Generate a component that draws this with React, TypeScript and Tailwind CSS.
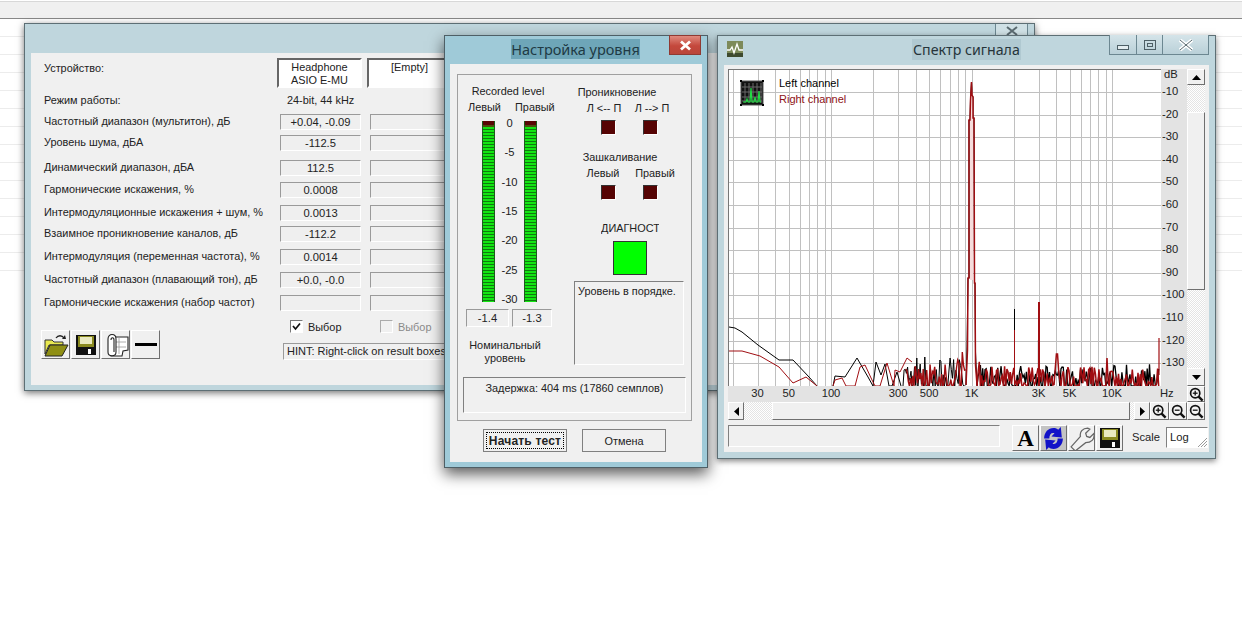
import React from "react";

const FONT = "font-['Liberation_Sans',Arial,sans-serif]";
const raisedEdge = "border border-t-white border-l-white border-r-[#6f6f6f] border-b-[#6f6f6f]";
const raised = `${raisedEdge} bg-[#f0f0f0]`;
const sunken = "border border-t-[#9a9a9a] border-l-[#9a9a9a] border-r-white border-b-white bg-[#efefef]";
const dither = "bg-[repeating-conic-gradient(#ffffff_0_25%,#e4e4e4_0_50%)] bg-[length:2px_2px]";

const rows: { label: string; value: string; mt: string }[] = [
  { label: "Частотный диапазон (мультитон), дБ", value: "+0.04, -0.09", mt: "mt-[6px]" },
  { label: "Уровень шума, дБА", value: "-112.5", mt: "mt-[6px]" },
  { label: "Динамический диапазон, дБА", value: "112.5", mt: "mt-[10px]" },
  { label: "Гармонические искажения, %", value: "0.0008", mt: "mt-[7px]" },
  { label: "Интермодуляционные искажения + шум, %", value: "0.0013", mt: "mt-[8px]" },
  { label: "Взаимное проникновение каналов, дБ", value: "-112.2", mt: "mt-[6px]" },
  { label: "Интермодуляция (переменная частота), %", value: "0.0014", mt: "mt-[8px]" },
  { label: "Частотный диапазон (плавающий тон), дБ", value: "+0.0, -0.0", mt: "mt-[8px]" },
  { label: "Гармонические искажения (набор частот)", value: "", mt: "mt-[8px]" },
];

function fx(f: number) {
  return 831 + 140.5 * Math.log10(f / 100);
}

const freqs = [20, 30, 40, 50, 60, 70, 80, 90, 100, 200, 300, 400, 500, 600, 700, 800, 900, 1000, 2000, 3000, 4000, 5000, 6000, 7000, 8000, 9000, 10000];
const dbLines = Array.from({ length: 13 }, (_, i) => Math.round(92 + i * 22.6) + 0.5);

function noise(seed: number, start: number, end: number, amp: number, peaks: [number, number][]) {
  let s = seed;
  const rnd = () => {
    s = (s * 1103515245 + 12345) & 0x7fffffff;
    return s / 0x7fffffff;
  };
  const pts: string[] = [];
  for (let x = start; x < end; x += 1.15) {
    const boost = x > 950 && x < 985 ? 10 : 0;
    const r = rnd();
    let y = 386 - Math.pow(r, 1.25) * amp - boost * rnd();
    if (rnd() > 0.72) y = 386;
    for (const [px, py] of peaks) {
      if (Math.abs(x - px) < 0.7) y = py;
    }
    pts.push(`${x.toFixed(1)},${y.toFixed(1)}`);
  }
  return pts.join(" ");
}

const blackLow = "729,327 735,328 742,332 758,345 779,360 793,360 809,377 817,386";
const blackLow2 = "833,386 835,376 845,377 857,358 868,377 873,386 876,362 881,375 885,364 889,386 892,386 897,372 901,386";
const redLow = "729,351 742,351 760,356 779,367 793,383 806,377 817,386";
const redLow2 = "833,386 835,380 842,378 846,386 855,386 860,367 865,365 872,380 875,386 880,386 887,363 894,386 895,370 900,372 907,358 912,362";
const blackNoise = noise(77, 903, 966, 26, [[917, 358], [925, 357], [940, 360], [950, 358]]);
const blackNoise2 = noise(1313, 977, 1159, 22, []);
const redNoise = noise(4242, 906, 966, 22, [[958, 360], [962, 352]]);
const redNoise2 = noise(2024, 977, 1159, 20, [[1057, 354], [1107, 358]]);

function Plot() {
  return (
    <div className="relative w-[433px] h-[317px] shrink-0 bg-white border-t border-l border-[#777777] overflow-hidden">
      <svg className="absolute left-0 top-0" width="433" height="317" viewBox="729 70 433 317">
        {freqs.map((f) => (
          <line key={f} x1={Math.round(fx(f)) + 0.5} x2={Math.round(fx(f)) + 0.5} y1="69" y2="386" stroke="#c0c0c0" strokeWidth="1" />
        ))}
        {dbLines.map((y) => (
          <line key={y} x1="728" x2="1161" y1={y} y2={y} stroke="#c0c0c0" strokeWidth="1" />
        ))}
        <g fill="none" stroke="#000000" strokeWidth="1">
          <polyline points={blackLow} />
          <polyline points={blackLow2} />
          <polyline points={blackNoise} />
          <polyline points={blackNoise2} strokeWidth="1.3" />
          <polyline points="966,385 967,347 968,278 969,278 969,120 970,120 970.5,100 971.5,82 972,95 973,97 973,118 974,118 974.5,283 975,283 975.5,352 977,385" />
          <line x1="1014.5" x2="1014.5" y1="309" y2="386" strokeWidth="1" />
          <line x1="1038.5" x2="1038.5" y1="340" y2="386" strokeWidth="1.2" />
        </g>
        <polygon points="970,120 971.5,84 973,100 973,280 970,280" fill="#f6dcdc" />
        <g fill="none" stroke="#a00e12" strokeWidth="1">
          <polyline points={redLow} />
          <polyline points={redLow2} />
          <polyline points={redNoise} strokeWidth="1.4" />
          <polyline points={redNoise2} strokeWidth="1.5" />
          <polyline points="966,385 967.5,350 968,278 969,278 969,120 970,120 970.5,100 971.5,82 972,95 973,97 973,118 974,118 974.5,283 975,283 975.5,365 977,385" strokeWidth="1.5" />
          <line x1="1039" x2="1039" y1="302" y2="386" strokeWidth="2" />
          <line x1="1014.5" x2="1014.5" y1="330" y2="386" strokeWidth="1" />
          <line x1="1159" x2="1159" y1="338" y2="375" strokeWidth="1.2" />
        </g>
      </svg>
      <svg className="absolute left-[11px] top-[10px]" width="24" height="26" viewBox="0 0 24 26">
        <rect x="1" y="1" width="22" height="24" fill="#111" stroke="#555" />
        <path d="M5 3v20M9 3v20M13 3v20M17 3v20M21 3v20M2 7h20M2 12h20M2 17h20M2 21h20" stroke="#6b6b6b" strokeWidth="1" />
        <path d="M3 22h3l1-3 1 3h2l1-14 1 14h2l1-5 1 5h2l1-11 1 11h1" stroke="#22dd44" strokeWidth="1.2" fill="none" />
        <path d="M0 0h2v2H0zM22 0h2v2h-2zM0 24h2v2H0zM22 24h2v2h-2z" fill="#000" />
      </svg>
      <div className="absolute left-[50px] top-[5px] text-[11px] leading-[16px] text-black">
        <div>Left channel</div>
        <div className="text-[#8e1216]">Right channel</div>
      </div>
    </div>
  );
}

function FloppyIcon() {
  return (
    <svg width="24" height="24" viewBox="0 0 24 24">
      <rect x="2" y="2" width="20" height="20" fill="#111" />
      <rect x="4" y="3" width="16" height="9" fill="#8a8a20" />
      <rect x="6" y="4" width="12" height="7" fill="#e9e9c0" />
      <rect x="4" y="12" width="16" height="2" fill="#8a8a20" />
      <rect x="6" y="15" width="11" height="6" fill="#111" />
      <rect x="14" y="16" width="3" height="5" fill="#ffffff" />
    </svg>
  );
}

function ZoomIcon({ plus }: { plus?: boolean }) {
  return (
    <svg width="15" height="15" viewBox="0 0 15 15">
      <circle cx="6.2" cy="6.2" r="4.6" fill="#f4f4f4" stroke="#111" strokeWidth="1.7" />
      <line x1="9.6" y1="9.6" x2="13.6" y2="13.6" stroke="#111" strokeWidth="2.4" />
      <line x1="3.8" y1="6.2" x2="8.6" y2="6.2" stroke="#111" strokeWidth="1.3" />
      {plus && <line x1="6.2" y1="3.8" x2="6.2" y2="8.6" stroke="#111" strokeWidth="1.3" />}
    </svg>
  );
}

function Led() {
  return <div className="w-[15px] h-[15px] bg-[#560404] border border-t-[#333333] border-l-[#333333] border-r-white border-b-white" />;
}

function Meter() {
  return (
    <div className="w-[13px] h-[181px] flex flex-col bg-[#0a5a0a] border-x border-[#1c5c1c]">
      <div className="h-[4px] bg-[#5a0505]" />
      <div className="h-[2px] bg-[#4d4d10]" />
      <div className="flex-1 bg-[repeating-linear-gradient(to_bottom,#12e612_0,#12e612_2px,#0f7a0f_2px,#0f7a0f_3px)]" />
    </div>
  );
}

function MainWindow() {
  return (
    <div className={`absolute left-[24px] top-[23px] w-[1011px] h-[368px] border border-[#5d6f75] bg-[#bfd6dd] shadow-[0_2px_7px_rgba(0,0,0,0.55)] text-[10.9px] leading-[14px] text-[#222222] ${FONT}`}>
      <div className="absolute right-[6px] top-0 w-[33px] h-[20px] border-x border-b border-[#6c8791] bg-[#cfe0e5] flex justify-center pt-[2px]">
        <svg width="14" height="10" viewBox="0 0 14 10">
          <path d="M2 1l5 4 5-4M2 9l5-4 5 4" stroke="#5a6a70" strokeWidth="2" fill="none" />
        </svg>
      </div>
      <div className="h-[29px]" />
      <div className="ml-[6px] mr-[6px] h-[332px] bg-[#f0f0f0] flex flex-col pl-[13px]">
        <div className="flex mt-[5px] h-[30px]">
          <div className="w-[233px] pt-[3px]">Устройство:</div>
          <div className="w-[85px] h-[30px] border-2 border-t-[#666666] border-l-[#666666] border-r-white border-b-white bg-white text-center leading-[13px] pt-px">
            Headphone
            <br />
            ASIO E-MU
          </div>
          <div className="w-[85px] h-[30px] ml-[5px] border-2 border-t-[#666666] border-l-[#666666] border-r-white border-b-white bg-white text-center leading-[13px] pt-px">
            [Empty]
          </div>
        </div>
        <div className="flex mt-[5px] h-[15px] items-center pb-[2px]">
          <div className="w-[243px]">Режим работы:</div>
          <div>24-bit, 44 kHz</div>
        </div>
        {rows.map((r) => (
          <div key={r.label} className={`flex h-[15px] items-center ${r.mt}`}>
            <div className="w-[236px] whitespace-nowrap pb-[2px]">{r.label}</div>
            <div className={`w-[81px] h-[16px] text-center leading-[14px] text-[11.2px] ${sunken}`}>{r.value}</div>
            <div className={`w-[81px] h-[16px] ml-[9px] ${sunken}`} />
          </div>
        ))}
        <div className="flex mt-[10px]">
          <div className="flex mt-[10px] ml-[-3px] h-[29px]">
            <div className={`w-[29px] h-[29px] flex items-center justify-center ${raised}`}>
              <svg width="26" height="26" viewBox="0 0 26 26">
                <path d="M2 8h7l2 2h9v3H6L2 22z" fill="#e8e850" stroke="#333" strokeWidth="1" />
                <path d="M2 24l5-11h18l-6 11z" fill="#8f8f14" stroke="#222" strokeWidth="1" />
                <path d="M13 6c2-3 6-3 8 0" stroke="#222" fill="none" strokeWidth="1.3" />
                <path d="M19 7l4 0-1-4z" fill="#222" />
              </svg>
            </div>
            <div className={`w-[29px] h-[29px] ml-px flex items-center justify-center ${raised}`}>
              <FloppyIcon />
            </div>
            <div className={`w-[29px] h-[29px] ml-px flex items-center justify-center ${raised}`}>
              <svg width="26" height="26" viewBox="0 0 26 26">
                <path d="M8 5h17v13l-5 1-1 5H8z" fill="#fff" stroke="#222" strokeWidth="1.1" />
                <path d="M9 10h14M9 15h14M16 5v17" stroke="#999" strokeWidth="0.8" />
                <path d="M5 7c0-6 8-6 8 0v13c0 5-8 5-8 0V7zM8 8c0-3 3-3 3 0v12" fill="#fff" stroke="#222" strokeWidth="1.1" />
              </svg>
            </div>
            <div className={`w-[29px] h-[29px] ml-px flex items-center justify-center ${raised}`}>
              <div className="w-[22px] h-[3px] bg-black" />
            </div>
          </div>
          <div className="ml-[123px] w-[400px]">
            <div className="flex items-center h-[13px]">
              <div className="ml-[7px] w-[13px] h-[13px] border border-t-[#777777] border-l-[#777777] border-r-white border-b-white bg-white flex items-center justify-center">
                <svg width="9" height="9" viewBox="0 0 9 9">
                  <path d="M1 4l2.5 3L8 1.5" stroke="#111" strokeWidth="1.7" fill="none" />
                </svg>
              </div>
              <span className="ml-[5px] w-[32px]">Выбор</span>
              <div className="ml-[40px] w-[13px] h-[13px] border border-t-[#aaaaaa] border-l-[#aaaaaa] border-r-white border-b-white bg-[#f0f0f0]" />
              <span className="ml-[5px] text-[#8a8a8a]">Выбор</span>
            </div>
            <div className="mt-[10px] h-[17px] w-[380px] border border-t-[#9a9a9a] border-l-[#9a9a9a] border-r-white border-b-white pl-[3px] leading-[15px] text-[11px] whitespace-nowrap">
              HINT: Right-click on result boxes
            </div>
          </div>
        </div>
      </div>
    </div>
  );
}

const scale = ["0", "-5", "-10", "-15", "-20", "-25", "-30"];

function LevelDialog() {
  return (
    <div className={`absolute left-[444px] top-[35px] w-[264px] h-[433px] border border-[#4e5f66] bg-[#9fcad8] shadow-[0_6px_14px_rgba(0,0,0,0.65)] text-[10.9px] leading-[14px] text-[#222222] ${FONT}`}>
      <div className="relative h-[28px] flex justify-center pt-[3px]">
        <span className="ml-[-1px] h-[20px] bg-[#6ea6b8] text-[#203a44] text-[14.5px] leading-[20px] font-['Noto_Sans',sans-serif]">Настройка уровня</span>
        <div className="absolute right-[6px] top-[-1px] w-[32px] h-[20px] border border-[#8f3a33] bg-[linear-gradient(to_bottom,#e08a7e,#c4483c_55%,#b9463b)] flex items-center justify-center">
          <svg width="13" height="11" viewBox="0 0 13 11">
            <path d="M2 1.5l9 8M11 1.5l-9 8" stroke="#ffffff" strokeWidth="2.8" />
          </svg>
        </div>
      </div>
      <div className="mx-[5px] h-[398px] bg-[#f0f0f0] pt-[10px] flex flex-col">
        <div className="ml-[7px] w-[235px] h-[347px] border border-[#a0a0a0] flex flex-col">
          <div className="flex h-[289px]">
            <div className="w-[100px]">
              <div className="mt-[9px] text-center">Recorded level</div>
              <div className="mt-[2px] flex ml-[10px] gap-[14px]">
                <span className="w-[33px]">Левый</span>
                <span>Правый</span>
              </div>
              <div className="flex mt-[7px] ml-[24px] h-[181px]">
                <Meter />
                <div className="w-[29px] h-[190px] -mt-[5px] flex flex-col justify-between items-center text-[11.2px]">
                  {scale.map((s) => (
                    <div key={s} className="h-[14px]">{s}</div>
                  ))}
                </div>
                <Meter />
              </div>
              <div className="flex mt-[7px] ml-[8px] gap-[3px] text-[11.2px]">
                <div className={`w-[43px] h-[18px] text-center leading-[16px] ${sunken}`}>-1.4</div>
                <div className={`w-[40px] h-[18px] text-center leading-[16px] ${sunken}`}>-1.3</div>
              </div>
              <div className="mt-[12px] w-[94px] text-center leading-[13px]">
                Номинальный
                <br />
                уровень
              </div>
            </div>
            <div className="ml-[12px] w-[120px]">
              <div className="mt-[10px] w-[94px] text-center">Проникновение</div>
              <div className="flex mt-[2px] ml-[10px]">
                <div className="w-[48px] text-center">Л &lt;-- П</div>
                <div className="w-[48px] text-center">Л --&gt; П</div>
              </div>
              <div className="flex mt-[5px] ml-[31px] gap-[27px]">
                <Led />
                <Led />
              </div>
              <div className="mt-[15px] w-[100px] text-center">Зашкаливание</div>
              <div className="flex mt-[2px] ml-[7px]">
                <div className="w-[52px] text-center">Левый</div>
                <div className="w-[52px] text-center">Правый</div>
              </div>
              <div className="flex mt-[5px] ml-[31px] gap-[27px]">
                <Led />
                <Led />
              </div>
              <div className="mt-[21px] ml-[31px] w-[58px] overflow-hidden whitespace-nowrap">ДИАГНОСТИКА</div>
              <div className="mt-[6px] ml-[43px] w-[34px] h-[34px] bg-[#00ff00] border border-[#333333]" />
              <div className="mt-[6px] ml-[4px] w-[110px] h-[84px] border border-t-[#808080] border-l-[#808080] border-r-white border-b-white px-[3px] pt-[2px] whitespace-nowrap">
                Уровень в порядке.
              </div>
            </div>
          </div>
          <div className="ml-[5px] mt-[13px] w-[223px] h-[36px] border border-t-[#808080] border-l-[#808080] border-r-white border-b-white text-center pt-[3px] whitespace-nowrap">
            Задержка: 404 ms (17860 семплов)
          </div>
        </div>
        <div className="flex ml-[33px] mt-[8px] gap-[15px]">
          <div className="w-[84px] h-[23px] border border-[#808080] p-[2px]">
            <div className="w-full h-full border border-dotted border-black flex items-center justify-center font-bold text-[12px] tracking-[0.2px]">Начать тест</div>
          </div>
          <div className="w-[84px] h-[23px] border border-[#808080] flex items-center justify-center">Отмена</div>
        </div>
      </div>
    </div>
  );
}

const xLabels: [string, number][] = [["30", 30], ["50", 50], ["100", 100], ["300", 300], ["500", 500], ["1K", 1000], ["3K", 3000], ["5K", 5000], ["10K", 10000]];
const dbLabels = ["-10", "-20", "-30", "-40", "-50", "-60", "-70", "-80", "-90", "-100", "-110", "-120", "-130"];

function Tri({ d }: { d: string }) {
  return (
    <svg width="9" height="9" viewBox="0 0 9 9">
      <path d={d} fill="#000" />
    </svg>
  );
}

function SpectrumWindow() {
  return (
    <div className={`absolute left-[717px] top-[35px] w-[499px] h-[424px] border border-[#5d6f75] bg-[#bfd6dd] shadow-[0_2px_6px_rgba(0,0,0,0.5)] text-[10.9px] leading-[14px] text-[#222222] ${FONT}`}>
      <div className="relative h-[29px] flex items-start">
        <svg className="absolute left-[9px] top-[5px]" width="16" height="16" viewBox="0 0 16 16">
          <rect width="16" height="16" fill="#7d8a5a" />
          <rect y="12" width="16" height="4" fill="#3e4a2e" />
          <path d="M0 9h3l2-3 2 6 3-9 2 6h4" stroke="#ffffff" strokeWidth="1.3" fill="none" />
        </svg>
        <span className="ml-[194px] mt-[3px] px-px h-[21px] bg-[#b0c9d1] text-[#26343a] text-[14.2px] leading-[21px] font-['Noto_Sans',sans-serif]">Спектр сигнала</span>
        <div className="absolute right-[6px] top-[-1px] h-[20px] flex border-x border-b border-[#6c8791] bg-[linear-gradient(to_bottom,#d5e4e9,#b9d0d8)]">
          <div className="w-[27px] flex items-center justify-center border-r border-[#6c8791]">
            <div className="mt-[6px] w-[12px] h-[5px] border border-[#4e5f66] bg-[#e4edf0]" />
          </div>
          <div className="w-[26px] flex items-center justify-center border-r border-[#6c8791]">
            <div className="w-[12px] h-[10px] border border-[#4e5f66] flex items-center justify-center">
              <div className="w-[6px] h-[4px] border border-[#4e5f66]" />
            </div>
          </div>
          <div className="w-[45px] flex items-center justify-center">
            <svg width="16" height="12" viewBox="0 0 16 12">
              <path d="M2 1l12 10M14 1L2 11" stroke="#ffffff" strokeWidth="3.6" />
              <path d="M2 1l12 10M14 1L2 11" stroke="#5a6a70" strokeWidth="1" />
            </svg>
          </div>
        </div>
      </div>
      <div className="ml-[6px] w-[485px] h-[387px] bg-[#f0f0f0] pl-[4px] pt-[4px]">
        <div className="flex h-[317px]">
          <Plot />
          <div className="w-[26px] shrink-0 h-[317px] bg-[#e3e3e3] pl-px text-[11.2px] leading-[22.6px]">
            <div className="h-[11px] leading-[11px] pl-[2px]">dB</div>
            {dbLabels.map((d) => (
              <div key={d} className="h-[22.6px]">{d}</div>
            ))}
          </div>
          <div className="w-[18px] shrink-0 h-[317px] flex flex-col">
            <div className={`h-[16px] flex items-center justify-center ${raised}`}>
              <Tri d="M4.5 2L9 7H0z" />
            </div>
            <div className={`h-[27px] ${dither}`} />
            <div className={`h-[178px] ${raised}`} />
            <div className={`h-[78px] ${dither}`} />
            <div className={`h-[18px] flex items-center justify-center ${raised}`}>
              <Tri d="M0 2h9L4.5 7z" />
            </div>
          </div>
        </div>
        <div className="flex h-[16px]">
          <div className="relative w-[459px] h-[16px] bg-[#e3e3e3] text-[11.2px] leading-[15px]">
            {xLabels.map(([t, f]) => (
              <span key={t} className="absolute top-0 -translate-x-1/2" style={{ left: fx(f) - 728 }}>
                {t}
              </span>
            ))}
            <span className="absolute left-[432px] top-0">Hz</span>
          </div>
          <div className={`w-[18px] h-[16px] flex items-center justify-center ${raised}`}>
            <ZoomIcon plus />
          </div>
        </div>
        <div className="flex h-[18px]">
          <div className={`w-[16px] flex items-center justify-center ${raised}`}>
            <Tri d="M2 4.5L7 0v9z" />
          </div>
          <div className={`w-[28px] ${dither}`} />
          <div className={`w-[358px] ${raised}`} />
          <div className={`w-[4px] ${dither}`} />
          <div className={`w-[16px] flex items-center justify-center ${raised}`}>
            <Tri d="M2 0l5 4.5L2 9z" />
          </div>
          <div className={`w-[19px] flex items-center justify-center ${raised}`}>
            <ZoomIcon plus />
          </div>
          <div className={`w-[18px] flex items-center justify-center ${raised}`}>
            <ZoomIcon />
          </div>
          <div className={`w-[18px] flex items-center justify-center ${raised}`}>
            <ZoomIcon />
          </div>
        </div>
        <div className="flex mt-[5px] items-start">
          <div className="w-[272px] shrink-0 h-[22px] border border-t-[#808080] border-l-[#808080] border-r-white border-b-white" />
          <div className={`ml-[12px] w-[27px] shrink-0 h-[26px] flex items-center justify-center font-['Liberation_Serif',serif] font-bold text-[23px] leading-none text-black ${raised}`}>A</div>
          <div className={`ml-px w-[27px] shrink-0 h-[26px] flex items-center justify-center bg-[#c4c4c4] ${raisedEdge}`}>
            <svg width="25" height="25" viewBox="0 0 24 24">
              <path d="M3 12C3 6 7 2 12 2c2 0 3.500.5 4.500 1.500L19 1l1 10-10-1 3-3c-3-1-5 1-5 5z" fill="#1212c8" />
              <path d="M21 12c0 6-4 10-9 10-2 0-3.500-.5-4.500-1.500L5 23 4 13l10 1-3 3c3 1 5-1 5-5z" fill="#1212c8" />
            </svg>
          </div>
          <div className={`ml-px w-[27px] shrink-0 h-[26px] flex items-center justify-center ${raised}`}>
            <svg width="25" height="25" viewBox="0 0 24 24">
              <path d="M2 20l9-10c-1-4 2-8 7-8l2 1-4 4 1 3 3 1 4-4c1 6-3 9-8 9L6 24z" fill="#f2f2f2" stroke="#666" strokeWidth="1.2" />
            </svg>
          </div>
          <div className={`ml-px w-[27px] shrink-0 h-[26px] flex items-center justify-center ${raised}`}>
            <FloppyIcon />
          </div>
          <span className="ml-[9px] w-[34px] shrink-0 mt-[5px] text-[11.2px]">Scale</span>
          <div className="relative shrink-0 mt-[2px] w-[42px] h-[21px] border border-t-[#808080] border-l-[#808080] border-r-white border-b-white bg-white pl-[3px] text-[11.2px] leading-[18px]">
            Log
            <svg className="absolute right-[-1px] bottom-[-1px]" width="12" height="12" viewBox="0 0 12 12">
              <path d="M11 2L2 11M11 5L5 11M11 8L8 11" stroke="#9a9a9a" strokeWidth="1" />
            </svg>
          </div>
        </div>
      </div>
    </div>
  );
}

export default function App() {
  return (
    <div className="relative w-[1242px] h-[620px] bg-white overflow-hidden">
      <div className="h-[2px] bg-white border-b border-[#d8d8d8]" />
      <div className="h-[17px] bg-[#f0f0f0] border-b border-[#888888]" />
      <div className="h-[252px] bg-[repeating-linear-gradient(to_bottom,#ffffff_0,#ffffff_17px,#ececec_17px,#ececec_18px)]" />
      <MainWindow />
      <LevelDialog />
      <SpectrumWindow />
    </div>
  );
}
